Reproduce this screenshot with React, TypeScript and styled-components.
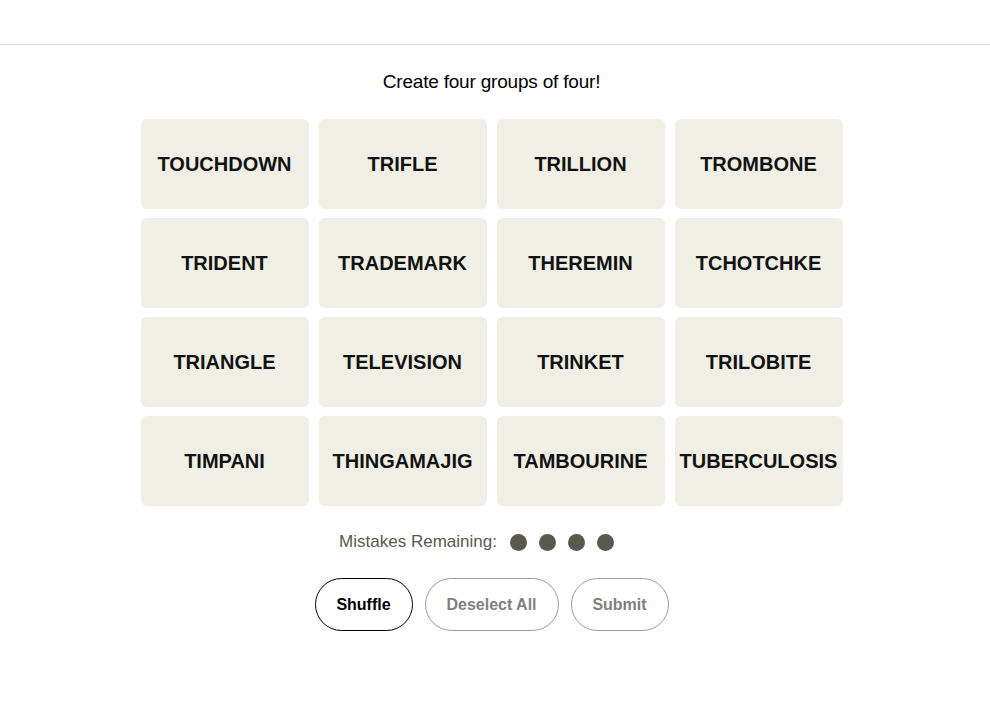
import React from 'react'
import styled, { createGlobalStyle } from 'styled-components'

const words = [
  'TOUCHDOWN', 'TRIFLE', 'TRILLION', 'TROMBONE',
  'TRIDENT', 'TRADEMARK', 'THEREMIN', 'TCHOTCHKE',
  'TRIANGLE', 'TELEVISION', 'TRINKET', 'TRILOBITE',
  'TIMPANI', 'THINGAMAJIG', 'TAMBOURINE', 'TUBERCULOSIS',
];

const GlobalStyle = createGlobalStyle`
  body {
    margin: 0;
    background: #fff;
    font-family: "Liberation Sans", Arial, sans-serif;
    color: #000;
  }
`;

const App = () => {
  return (
    <>
      <GlobalStyle />
      <Header />
      <Main>
        <Prompt>Create four groups of four!</Prompt>
        <Board>
          {words.map((w) => (
            <Tile key={w}>{w}</Tile>
          ))}
        </Board>
        <Mistakes>
          Mistakes Remaining:
          <Dots>
            {[0, 1, 2, 3].map((i) => <Dot key={i} />)}
          </Dots>
        </Mistakes>
        <Controls>
          <PillButton width={98}>Shuffle</PillButton>
          <PillButton width={134} disabled>Deselect All</PillButton>
          <PillButton width={98} disabled>Submit</PillButton>
        </Controls>
      </Main>
    </>
  );
};

export default App;

const Header = styled.header`
  height: 44px;
  border-bottom: 1px solid #dcdcdc;
`;

const Main = styled.main`
  display: flex;
  flex-direction: column;
  align-items: center;
  padding-right: 7px;
`;

const Prompt = styled.p`
  margin: 26px 0 0;
  font-size: 19px;
  line-height: 22px;
  font-weight: 400;
  letter-spacing: -0.2px;
`;

const Board = styled.div`
  display: grid;
  grid-template-columns: repeat(4, 168px);
  grid-auto-rows: 90px;
  column-gap: 10px;
  row-gap: 9px;
  margin-top: 26px;
`;

const Tile = styled.div`
  display: flex;
  align-items: center;
  justify-content: center;
  background: #efefe6;
  border-radius: 6px;
  font-size: 20px;
  font-weight: 700;
  color: #121212;
  white-space: nowrap;
  user-select: none;
`;

const Mistakes = styled.div`
  display: flex;
  align-items: center;
  gap: 13px;
  margin: 26px 30px 0 0;
  font-size: 17px;
  color: #5a594e;
  height: 20px;
`;

const Dots = styled.div`
  display: flex;
  gap: 12px;
`;

const Dot = styled.span`
  width: 17px;
  height: 17px;
  border-radius: 50%;
  background: #5a594e;
`;

const Controls = styled.div`
  display: flex;
  gap: 12px;
  margin-top: 26px;
`;

const PillButton = styled.button<{ width: number }>`
  width: ${({ width }) => width}px;
  height: 53px;
  border-radius: 999px;
  background: #fff;
  font-family: "Liberation Sans", Arial, sans-serif;
  font-size: 16px;
  font-weight: 700;
  color: #000;
  border: 1px solid #000;
  cursor: pointer;

  &:disabled {
    color: #7f7f7f;
    border-color: #9b9b9b;
    cursor: default;
  }
`;
